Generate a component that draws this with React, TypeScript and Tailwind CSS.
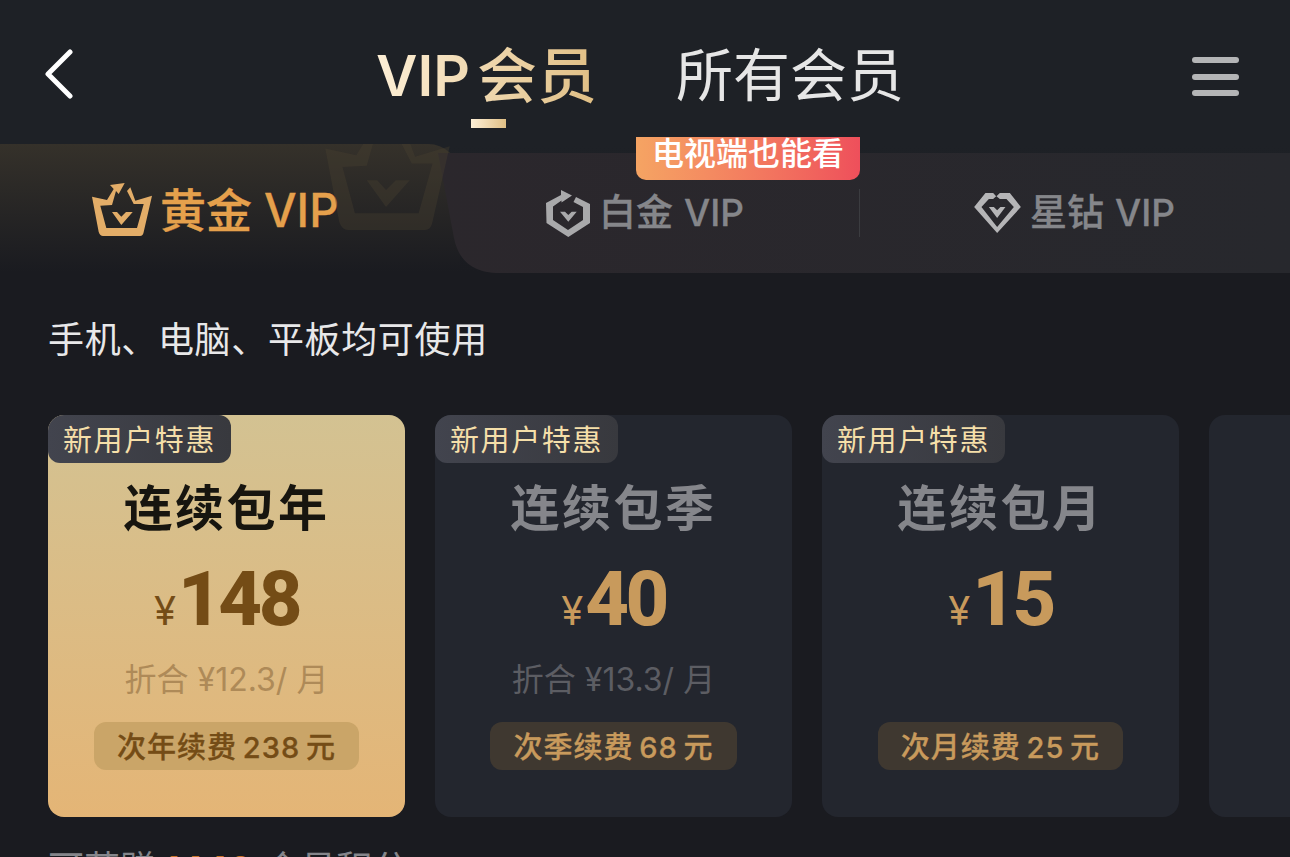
const sans = "font-['Inter','Noto_Sans_CJK_SC',sans-serif]";

function Crown({ className }: { className?: string }) {
  return (
    <svg viewBox="0 0 60 54" className={className} fill="currentColor">
      <path d="M0 13.7 L15 17 L21.7 6 L18 2 L32.7 0 L26.7 11 L24 8 L20 22 L8.3 22.7 L14.3 45 L45 45 L51.7 21 L41.7 21 L35 8 L38.3 4.3 L43.3 17.7 L60 12.7 L51.7 49 Q51 53 48 53 L11 53 Q8 53 6.7 49 Z" />
      <path d="M20 29 L25 29 L29.3 33.7 L34 29 L40.7 29 L29.3 42 Z" />
    </svg>
  );
}

function Shield({ className }: { className?: string }) {
  return (
    <svg viewBox="0 0 44 47" className={className} fill="currentColor">
      <path d="M15 0 L26 5.5 L15.5 12.5 L15.5 10.5 L7 16.5 L7 30 L22 40 L37 30 L37 17 L27.5 12 L30 7 L44 14 L44 33 L22.3 47 L0.5 33 L0 13 L15 5 Z" />
      <path d="M14 21.7 L19 21.7 L22.3 25 L25.7 21.7 L30.7 21.7 L22.3 31.7 Z" />
    </svg>
  );
}

function Diamond({ className }: { className?: string }) {
  return (
    <svg viewBox="0 0 46.7 40" className={className} fill="currentColor">
      <path d="M0 14 L11.3 0 L19 0 L22 3.3 L19 6 L14.7 6 L7.3 14 L23 34 L39.7 14 L32.3 6 L25.7 6 L22.3 3.3 L25.7 0 L35.7 0 L46.7 14 L23 40 Z" />
      <path d="M14.7 14 L19.7 14 L23 17.3 L26.3 14 L31.3 14 L23 25 Z" />
    </svg>
  );
}

type Plan = {
  title: string;
  price: string;
  per?: string;
  renew: string;
  renewWidth: string;
  active?: boolean;
};

const plans: Plan[] = [
  { title: "连续包年", price: "148", per: "折合 ¥12.3/ 月", renew: "次年续费 238 元", renewWidth: "w-[265px]", active: true },
  { title: "连续包季", price: "40", per: "折合 ¥13.3/ 月", renew: "次季续费 68 元", renewWidth: "w-[247px]" },
  { title: "连续包月", price: "15", renew: "次月续费 25 元", renewWidth: "w-[245px]" },
];

function PlanCard({ plan }: { plan: Plan }) {
  const active = plan.active;
  return (
    <div
      className={`relative flex h-[402px] w-[357px] shrink-0 flex-col items-center rounded-[16px] ${
        active ? "bg-gradient-to-b from-[#d3c292] to-[#e4b576]" : "bg-[#23262e]"
      }`}
    >
      <div className="absolute left-0 top-0 flex h-[48px] w-[183px] items-center justify-center rounded-[12px] rounded-tl-[16px] bg-gradient-to-r from-[#42444e] to-[#38393e] pt-[3px] text-[29px] tracking-[1.6px] text-[#f5dfa9]">
        新用户特惠
      </div>
      <div className={`mt-[62px] text-[49px] leading-[64px] font-bold tracking-[2.5px] ${active ? "text-[#17150f]" : "text-[#85868b]"}`}>
        {plan.title}
      </div>
      <div className={`mt-[20px] flex h-[76px] items-baseline font-['Roboto','Inter',sans-serif] ${active ? "text-[#744c16]" : "text-[#c89a5c]"}`}>
        <span className="mr-[2px] font-['Inter',sans-serif] text-[40px]">¥</span>
        <span className="text-[76px] leading-[76px] font-extrabold tracking-[-3.5px]">{plan.price}</span>
      </div>
      <div className={`mt-[21px] h-[44px] text-[32px] leading-[44px] ${active ? "text-[#ae8a58]" : "text-[#5c5d63]"}`}>
        {plan.per}
      </div>
      <div
        className={`mt-[20px] flex h-[48px] items-center justify-center rounded-[12px] pt-[3px] text-[29px] font-medium tracking-[1px] [word-spacing:-3px] [-webkit-text-stroke:0.3px_currentColor] ${plan.renewWidth} ${
          active ? "bg-[#caa568] text-[#744c16]" : "bg-[#3f3830] text-[#c89a5c]"
        }`}
      >
        {plan.renew}
      </div>
    </div>
  );
}

export default function App() {
  return (
    <div className={`${sans} h-[857px] w-[1290px] overflow-hidden bg-[#1a1b20]`}>
      {/* header */}
      <div className="relative flex h-[144px] items-center justify-between bg-[#1e2126] pl-[44px] pr-[51px] pt-[9px]">
        <svg viewBox="0 0 30 50" className="-mt-[5px] h-[50px] w-[30px]" fill="none" stroke="#fff" strokeWidth="5" strokeLinecap="round" strokeLinejoin="round">
          <path d="M26 3 L4 25 L26 47" />
        </svg>
        <div className="absolute left-[376px] top-[41px] flex items-center whitespace-nowrap text-[57px] leading-[70px]">
          <div className="flex w-[219px] items-center bg-gradient-to-r from-[#fdefd6] to-[#e0bf85] bg-clip-text text-transparent">
            <span className="font-semibold">VIP</span>
            <span className="ml-[7px] text-[60px] font-medium">会员</span>
          </div>
          <div className="ml-[81px] text-[#e6e6e6]">所有会员</div>
        </div>
        <div className="absolute left-[471px] top-[119px] h-[9px] w-[35px] bg-gradient-to-r from-[#fdefd6] to-[#e0bf85]" />
        <div className="flex w-[47px] flex-col gap-[10.5px]">
          <div className="h-[6px] rounded-full bg-[#b4b5b6]" />
          <div className="h-[6px] rounded-full bg-[#b4b5b6]" />
          <div className="h-[6px] rounded-full bg-[#b4b5b6]" />
        </div>
      </div>

      {/* tabs */}
      <div className="relative flex h-[128px] bg-gradient-to-b from-[#1e2126] to-[#1a1b20]">
        <div className="absolute left-0 top-0 h-[128px] w-[460px] rounded-tr-[32px] bg-gradient-to-b from-[#35312a] to-[#1a1b20]">
          <div className="absolute left-[92px] top-[38px] flex items-center whitespace-nowrap">
            <Crown className="h-[54px] w-[60px] text-[#e3ad68]" />
            <span className="ml-[8px] flex text-[46px] leading-[56px] font-medium text-[#e5a04c] [-webkit-text-stroke:0.3px_currentColor]">
              <span>黄金</span>
              <span className="ml-[12px]">VIP</span>
            </span>
          </div>
        </div>
        <div className="absolute left-[430px] top-[9px] flex h-[120px] w-[860px] items-center bg-gradient-to-r from-[#2b272c] to-[#27282d] [clip-path:path('M8_0H860V120H70C40_120_28_105_24_85Z')]">
          <div className="flex w-[429px] items-center whitespace-nowrap pl-[116px]">
            <Shield className="h-[47px] w-[44px] text-[#a9a9ab]" />
            <span className="ml-[9px] flex text-[37px] leading-[50px] font-medium text-[#85868a] [-webkit-text-stroke:0.3px_currentColor]">
              <span>白金</span>
              <span className="ml-[11px]">VIP</span>
            </span>
          </div>
          <div className="h-[48px] w-px bg-[#3b3c40]" />
          <div className="flex flex-1 items-center whitespace-nowrap pl-[114px]">
            <Diamond className="h-[40px] w-[47px] text-[#b5b5b7]" />
            <span className="ml-[9px] flex text-[37px] leading-[50px] font-medium text-[#85868a] [-webkit-text-stroke:0.3px_currentColor]">
              <span>星钻</span>
              <span className="ml-[11px]">VIP</span>
            </span>
          </div>
        </div>
        {/* ghost crown sits over both tab backgrounds */}
        <div className="pointer-events-none absolute inset-0 overflow-hidden">
          <Crown className="absolute left-[325px] top-[-24px] h-[112px] w-[125px] text-[#4a4130]/35" />
        </div>
        <div className="absolute left-[636px] top-[-7px] flex h-[43px] w-[224px] items-start justify-center overflow-hidden rounded-b-[10px] bg-gradient-to-r from-[#f5a463] to-[#ee4f5b] text-[32px] leading-[33px] font-medium text-white">
          电视端也能看
        </div>
      </div>

      {/* note */}
      <div className="mt-[46px] h-[44px] pl-[48px] text-[36px] leading-[44px] tracking-[0.65px] text-[#e8e8e9]">手机、电脑、平板均可使用</div>

      {/* plans */}
      <div className="mt-[53px] flex gap-[30px] pl-[48px]">
        {plans.map((p) => (
          <PlanCard key={p.title} plan={p} />
        ))}
        <div className="relative h-[402px] w-[357px] shrink-0 rounded-[16px] bg-[#23262e]" />
      </div>

      <div className="mt-[30px] flex pl-[48px] text-[36px] leading-[44px] text-[#85868b]">
        <span>可获赠</span>
        <span className="ml-[8px] font-bold text-[#c9742a]">1440</span>
        <span className="ml-[12px]">会员积分</span>
      </div>
    </div>
  );
}
